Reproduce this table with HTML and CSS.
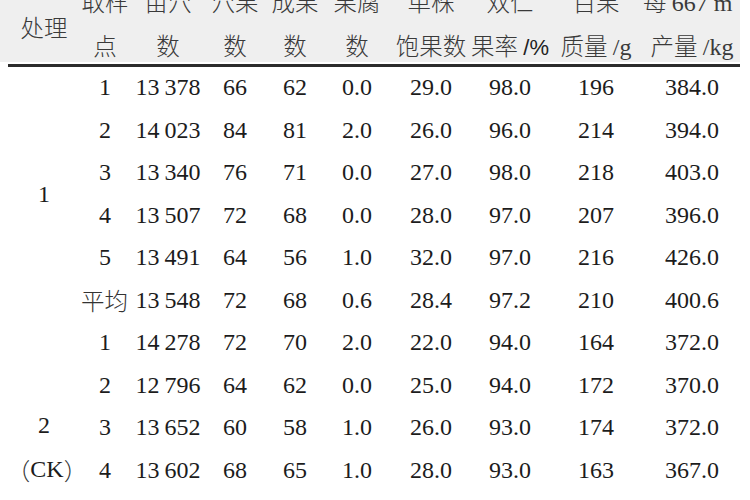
FILE: index.html
```html
<!DOCTYPE html>
<html lang="zh">
<head>
<meta charset="utf-8">
<title>表</title>
<link rel="stylesheet" href="styles.css">
</head>
<body>
<div class="page">
  <div class="head">
    <div class="head-grid">
      <div class="hc span2">处理</div>
      <div class="hc">取样</div>
      <div class="hc">亩穴</div>
      <div class="hc">穴果</div>
      <div class="hc">成果</div>
      <div class="hc">果腐</div>
      <div class="hc">单株</div>
      <div class="hc">双仁</div>
      <div class="hc">百果</div>
      <div class="hc hc-start"><span>每&nbsp;<span class="num">667&nbsp;m<sup>2</sup></span></span></div>
      <div class="hc">点</div>
      <div class="hc">数</div>
      <div class="hc">数</div>
      <div class="hc">数</div>
      <div class="hc">数</div>
      <div class="hc">饱果数</div>
      <div class="hc"><span>果率&nbsp;<span class="unit">/%</span></span></div>
      <div class="hc"><span>质量&nbsp;<span class="num">/g</span></span></div>
      <div class="hc"><span>产量&nbsp;<span class="num">/kg</span></span></div>
    </div>
  </div>
  <div class="rule"></div>
  <div class="body-grid">
    <div class="grp g1"><span class="num">1</span></div>
    <div class="c">1</div><div class="c">13&#8201;378</div><div class="c">66</div><div class="c">62</div><div class="c">0.0</div><div class="c">29.0</div><div class="c">98.0</div><div class="c">196</div><div class="c">384.0</div>
    <div class="c">2</div><div class="c">14&#8201;023</div><div class="c">84</div><div class="c">81</div><div class="c">2.0</div><div class="c">26.0</div><div class="c">96.0</div><div class="c">214</div><div class="c">394.0</div>
    <div class="c">3</div><div class="c">13&#8201;340</div><div class="c">76</div><div class="c">71</div><div class="c">0.0</div><div class="c">27.0</div><div class="c">98.0</div><div class="c">218</div><div class="c">403.0</div>
    <div class="c">4</div><div class="c">13&#8201;507</div><div class="c">72</div><div class="c">68</div><div class="c">0.0</div><div class="c">28.0</div><div class="c">97.0</div><div class="c">207</div><div class="c">396.0</div>
    <div class="c">5</div><div class="c">13&#8201;491</div><div class="c">64</div><div class="c">56</div><div class="c">1.0</div><div class="c">32.0</div><div class="c">97.0</div><div class="c">216</div><div class="c">426.0</div>
    <div class="c cjk">平均</div><div class="c">13&#8201;548</div><div class="c">72</div><div class="c">68</div><div class="c">0.6</div><div class="c">28.4</div><div class="c">97.2</div><div class="c">210</div><div class="c">400.6</div>
    <div class="grp g2"><span class="num">2</span><span class="ck"><span class="cjk">（</span><span class="num">CK</span><span class="cjk">）</span></span></div>
    <div class="c">1</div><div class="c">14&#8201;278</div><div class="c">72</div><div class="c">70</div><div class="c">2.0</div><div class="c">22.0</div><div class="c">94.0</div><div class="c">164</div><div class="c">372.0</div>
    <div class="c">2</div><div class="c">12&#8201;796</div><div class="c">64</div><div class="c">62</div><div class="c">0.0</div><div class="c">25.0</div><div class="c">94.0</div><div class="c">172</div><div class="c">370.0</div>
    <div class="c">3</div><div class="c">13&#8201;652</div><div class="c">60</div><div class="c">58</div><div class="c">1.0</div><div class="c">26.0</div><div class="c">93.0</div><div class="c">174</div><div class="c">372.0</div>
    <div class="c">4</div><div class="c">13&#8201;602</div><div class="c">68</div><div class="c">65</div><div class="c">1.0</div><div class="c">28.0</div><div class="c">93.0</div><div class="c">163</div><div class="c">367.0</div>
    <div class="c">5</div><div class="c">13&#8201;478</div><div class="c">66</div><div class="c">62</div><div class="c">1.0</div><div class="c">24.0</div><div class="c">95.0</div><div class="c">168</div><div class="c">371.0</div>
    <div class="c cjk">平均</div><div class="c">13&#8201;561</div><div class="c">66</div><div class="c">63</div><div class="c">1.0</div><div class="c">25.0</div><div class="c">93.8</div><div class="c">168</div><div class="c">370.6</div>
  </div>
</div>
</body>
</html>
```
FILE: styles.css
```css
html, body {
  margin: 0;
  padding: 0;
  background: #ffffff;
}
.page {
  width: 750px;
  height: 500px;
  overflow: hidden;
}
.head {
  width: 732px;
  height: 62px;
  padding-left: 8px;
  background: #efefef;
  overflow: hidden;
}
.head-grid {
  display: grid;
  grid-template-columns: 72px 50px 76px 58px 62px 62px 86px 72px 100px 92px;
  grid-template-rows: 44px 44px;
  margin-top: -21px;
  font-family: "Noto Sans CJK SC", "Noto Sans", sans-serif;
  font-weight: 300;
  font-size: 23.5px;
  color: #3a3a3a;
}
.hc {
  display: flex;
  align-items: center;
  justify-content: center;
  white-space: nowrap;
}
.hc-start {
  justify-content: flex-start;
  margin-left: -3px;
}
.hc.span2 {
  grid-row: 1 / span 2;
  padding-top: 8px;
}
.num {
  font-family: "Liberation Serif", "Times New Roman", serif;
  font-weight: 400;
  font-size: 24px;
}
.num sup {
  font-size: 14px;
  vertical-align: 1em;
}
.unit {
  font-family: "Liberation Sans", Arial, sans-serif;
  font-weight: 400;
  font-size: 22px;
  color: #222;
}
.rule {
  margin: 2px 0 0 8px;
  width: 732px;
  height: 2.5px;
  background: #2b2b2b;
}
.body-grid {
  display: grid;
  grid-template-columns: 80px 50px 76px 58px 62px 62px 86px 72px 100px 92px;
  grid-auto-rows: 42.5px;
  font-family: "Liberation Serif", "Times New Roman", serif;
  font-size: 24px;
  color: #1c1c1c;
}
.c {
  display: flex;
  align-items: center;
  justify-content: center;
  white-space: nowrap;
}
.cjk {
  font-family: "Noto Sans CJK SC", "Noto Sans", sans-serif;
  font-weight: 300;
  font-size: 23.5px;
  color: #333;
}
.c.cjk {
  justify-content: flex-end;
  padding-right: 2px;
}
.grp {
  grid-column: 1;
  display: flex;
  flex-direction: column;
  align-items: center;
  justify-content: center;
  padding-left: 8px;
}
.g1 {
  grid-row: 1 / span 6;
}
.g2 {
  grid-row: 7 / span 6;
  gap: 14px;
}
.ck {
  display: flex;
  align-items: center;
  margin-left: 6px;
}
```
